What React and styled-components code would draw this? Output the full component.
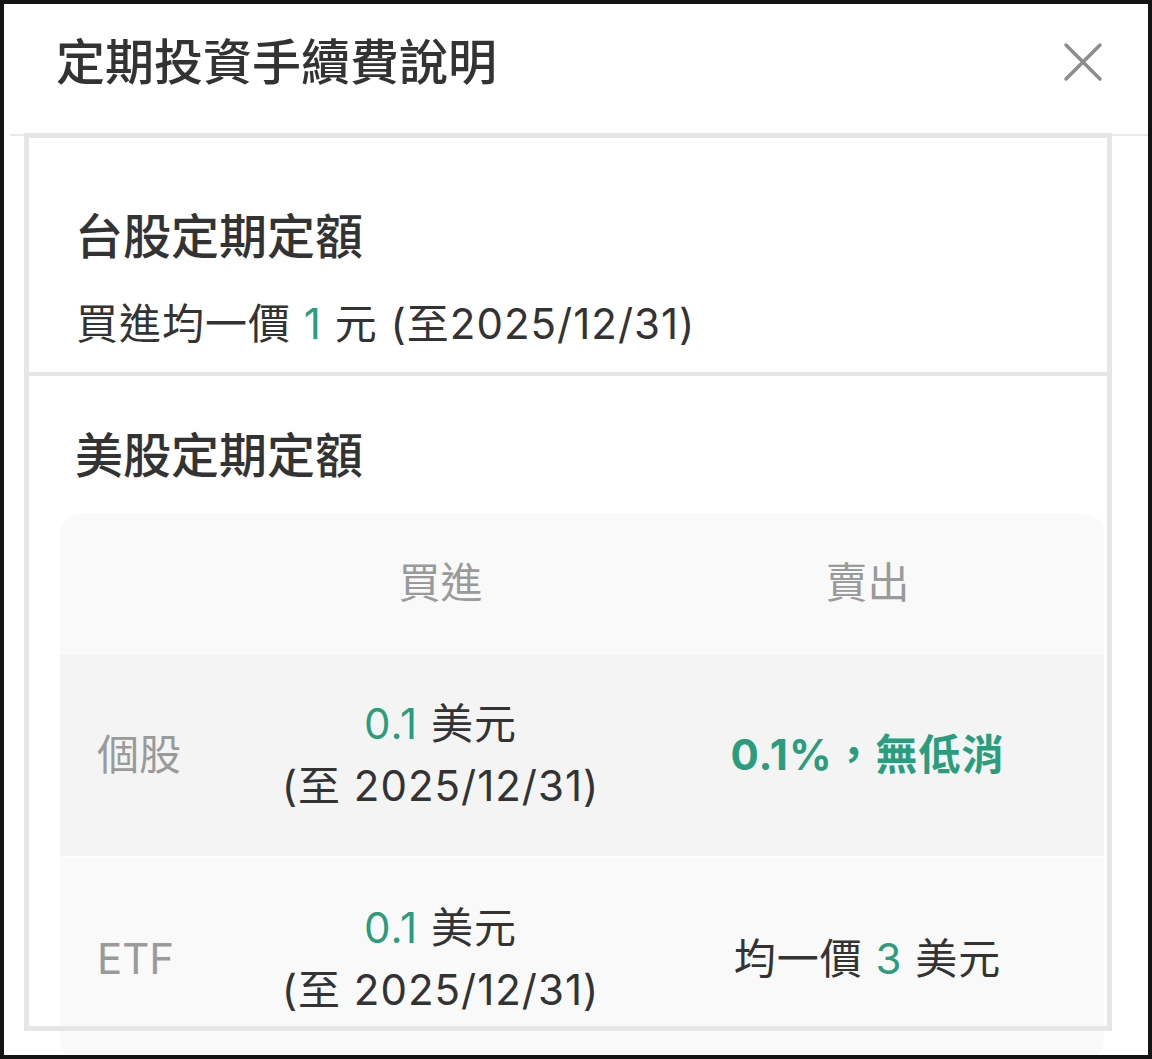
import React from 'react';
import styled, { createGlobalStyle } from 'styled-components';

const GlobalStyle = createGlobalStyle`
  html, body {
    margin: 0;
    padding: 0;
    background: #fff;
  }
  body {
    font-family: Inter, "Noto Sans CJK TC", sans-serif;
    color: #333;
  }
`;

const GREEN = '#2b9d7f';

const Frame = styled.div`
  width: 1152px;
  height: 1059px;
  box-sizing: border-box;
  border: 4px solid #141414;
  background: #fff;
  overflow: hidden;
`;

const Header = styled.div`
  display: flex;
  align-items: flex-start;
  justify-content: space-between;
  height: 132px;
  box-sizing: border-box;
  margin-left: 6px;
  padding: 25px 45px 0 46px;
  border-bottom: 2px solid #e9e9e9;
`;

const Title = styled.h1`
  margin: 0;
  font-family: "Noto Sans CJK TC", sans-serif;
  font-size: 49px;
  line-height: 60px;
  font-weight: 500;
  color: #333;
`;

const CloseButton = styled.button`
  width: 40px;
  height: 40px;
  margin-top: 13px;
  padding: 0;
  border: none;
  background: none;
  display: flex;
  align-items: center;
  justify-content: center;
`;

const Box = styled.div`
  width: 1088px;
  height: 898px;
  box-sizing: border-box;
  margin: -3px 0 0 20px;
  padding: 5px;
  outline: 5px solid #e6e6e6;
  outline-offset: -5px;
`;

const Section = styled.section`
  padding: ${p => p.$top}px 0 ${p => p.$bottom}px 46px;
  border-bottom: ${p => (p.$divider ? '4px solid #e6e6e6' : 'none')};
`;

const Heading = styled.h2`
  margin: 0;
  font-family: "Noto Sans CJK TC", sans-serif;
  font-size: 48px;
  line-height: 58px;
  font-weight: 500;
  color: #333;
`;

const BodyText = styled.p`
  margin: 34px 0 0 1px;
  font-size: 42px;
  line-height: 56px;
  letter-spacing: 1px;
  color: #333;
`;

const Em = styled.span`
  color: ${GREEN};
  font-weight: ${p => (p.$bold ? 700 : 400)};
`;

const Table = styled.div`
  width: 1044px;
  margin: 33px 0 0 -15px;
  border-radius: 20px;
  overflow: hidden;
  background: #f9f9f9;
`;

const Row = styled.div`
  display: grid;
  grid-template-columns: 167px 427px 427px;
  align-items: center;
  height: ${p => p.$height}px;
  background: ${p => p.$bg};
  border-top: ${p => (p.$first ? 'none' : '2px solid #fcfcfc')};
`;

const Label = styled.div`
  padding-left: 37px;
  font-size: 42px;
  line-height: 56px;
  color: #9a9a9a;
`;

const HeadCell = styled.div`
  text-align: center;
  font-size: 42px;
  line-height: 56px;
  color: #9a9a9a;
`;

const Cell = styled.div`
  text-align: center;
  font-size: 42px;
  line-height: 62px;
  letter-spacing: 1px;
  color: #333;
`;

const CloseIcon = () => (
  <svg width="40" height="40" viewBox="0 0 40 40">
    <path d="M3 3 L37 37 M37 3 L3 37" stroke="#8c8c8c" strokeWidth="3.5" strokeLinecap="round" />
  </svg>
);

const rows = [
  {
    label: '個股',
    bg: '#f4f4f4',
    sell: <Em $bold>0.1%，無低消</Em>,
  },
  {
    label: 'ETF',
    bg: '#f9f9f9',
    sell: <>均一價 <Em>3</Em> 美元</>,
  },
];

const App = () => {
  return (
    <Frame>
      <GlobalStyle />
      <Header>
        <Title>定期投資手續費說明</Title>
        <CloseButton aria-label="關閉">
          <CloseIcon />
        </CloseButton>
      </Header>
      <Box>
        <Section $top={66} $bottom={20} $divider>
          <Heading>台股定期定額</Heading>
          <BodyText>
            買進均一價 <Em>1</Em> 元 (至2025/12/31)
          </BodyText>
        </Section>
        <Section $top={47} $bottom={0}>
          <Heading>美股定期定額</Heading>
          <Table>
            <Row $height={138} $bg="#f9f9f9" $first>
              <span />
              <HeadCell>買進</HeadCell>
              <HeadCell>賣出</HeadCell>
            </Row>
            {rows.map(r => (
              <Row key={r.label} $height={202} $bg={r.bg}>
                <Label>{r.label}</Label>
                <Cell>
                  <Em>0.1</Em> 美元
                  <br />
                  (至 2025/12/31)
                </Cell>
                <Cell>{r.sell}</Cell>
              </Row>
            ))}
          </Table>
        </Section>
      </Box>
    </Frame>
  );
};

export default App;
